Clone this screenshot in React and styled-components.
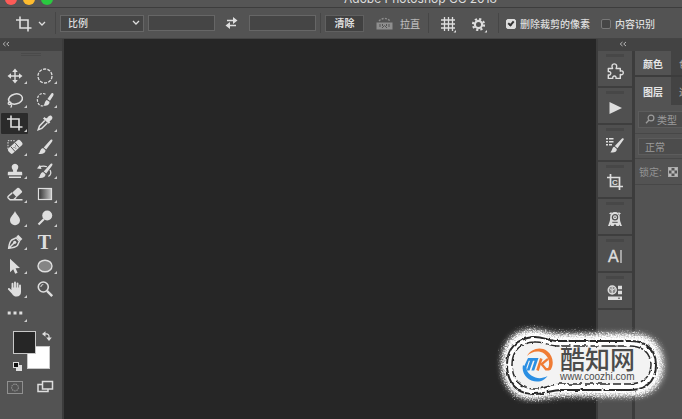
import React from "react";
import styled, { createGlobalStyle } from "styled-components";

const Svg = ({ size = 18, width, height, children, ...rest }) => (
  <svg
    width={width || size}
    height={height || size}
    viewBox={`0 0 ${width || size} ${height || size}`}
    fill="none"
    stroke="#dedede"
    strokeWidth="1.4"
    aria-hidden="true"
    {...rest}
  >
    {children}
  </svg>
);

const fill = { fill: "#dedede", stroke: "none" };

const MoveIcon = () => (
  <Svg>
    <path d="M9 3v12M3 9h12" />
    <path {...fill} d="M9 1.5 11.8 5H6.2zM9 16.5 6.2 13h5.600zM1.5 9 5 6.200v5.600zM16.5 9 13 11.800V6.200z" />
  </Svg>
);

const MarqueeIcon = () => (
  <Svg>
    <circle cx="9" cy="9" r="7" strokeWidth="1.3" strokeDasharray="3.2 1.2" />
  </Svg>
);

const LassoIcon = () => (
  <Svg>
    <ellipse cx="9.5" cy="8" rx="7" ry="5" transform="rotate(-14 9.5 8)" strokeWidth="1.500" />
    <path d="M3.6 11c-2 .4-1.800 2.700.2 2.500 1.800-.2 1.700-2.200-.2-2.500M4.800 13.300c1.200.8.900 2.300-.2 3.200" strokeWidth="1.300" />
  </Svg>
);

const QuickSelectIcon = () => (
  <Svg>
    <path d="M9.500 3.200C5 1 1.200 4.300 1.400 8.900c.2 4.500 3 6.500 6.400 6" strokeWidth="1.200" strokeDasharray="2.500 1.300" />
    <path {...fill} d="M17 2.300c.8.500.7 1.600.2 2.500l-3.200 5-2.600-1.700 3.600-5.200c.6-.8 1.300-1 2-.6zM10.800 9l2.700 1.800c.3 2.800-2.500 4.400-6.300 3.900 1.800-1.100 1.300-4.600 3.600-5.700z" />
  </Svg>
);

const CropIcon = () => (
  <Svg>
    <path d="M5 1.500V13h11.500M1 5h12v11.500" strokeWidth="1.600" />
  </Svg>
);

const EyedropperIcon = () => (
  <Svg>
    <path {...fill} d="M11 4.200c1.500-2 2.900-3.200 4.500-2.300 1.700 1.300 1 3.100-.9 4.700l-1.100.8.800.9-1.600 1.400-5.700-5.100L8.500 3l1 .900z" />
    <path d="M8.800 6.500 3.500 12l-1.300 3.800 3.600-1.400L11.300 9" strokeWidth="1.500" />
  </Svg>
);

const HealingIcon = () => (
  <Svg>
    <path d="M2 11V2.700h7" strokeWidth="1" strokeDasharray="1.500 1.200" />
    <rect {...fill} x="1.300" y="5.700" width="16" height="6.600" rx="2" transform="rotate(-42 9 9)" />
    <path d="m4.800 8.700 4.400 5M9 4.700 13.300 9.700" stroke="#535353" strokeWidth="1" />
    <path d="M8 9.500h.1M9.800 10.200h.1M9.500 8h.1" stroke="#535353" strokeLinecap="round" strokeWidth="1" />
  </Svg>
);

const BrushShape = () => (
  <path {...fill} d="M16 1.600c.8.600.5 1.400 0 2.200l-5.800 7.700-2.500-2 6.300-7.100c.8-.8 1.300-1.200 2-.8zM7 10l2.500 2.200c.1 3-3.200 4.400-7.300 3.600 2.200-.8 1.600-5.100 4.800-5.800z" />
);

const BrushIcon = () => (
  <Svg>
    <BrushShape />
  </Svg>
);

const StampIcon = () => (
  <Svg>
    <path {...fill} d="M9 1.700a3.300 3.300 0 0 1 3 4.700c-.9 1.500-1.300 2.200-1.100 3.400H15c.8 0 1.200.5 1.200 1.200v2.300H1.800V11c0-.7.400-1.200 1.200-1.200h4.100c.2-1.200-.2-1.900-1.100-3.400a3.300 3.300 0 0 1 3-4.700zM3 14.500h12V16H3z" />
  </Svg>
);

const HistoryBrushIcon = () => (
  <Svg>
    <BrushShape />
    <path d="M3 5.500c3-2 5-1.700 8-.8M14 8c1.500 2.600.6 5-1.600 6.600" strokeWidth="1.200" />
    <path {...fill} d="M1 6.500 4 2.800 5.500 7z" />
  </Svg>
);

const EraserIcon = () => (
  <Svg>
    <path {...fill} d="m6.300 7.500 5-4.400c.7-.6 1.500-.5 2.100.1l2.400 2.700c.5.600.4 1.200-.2 1.800l-5 4.500z" />
    <path d="m6.200 7.900-3.900 3.400c-.6.6-.6 1.200-.1 1.700l1.900 1.700h3.400l2.800-2.500M6 14.700h10.500" strokeWidth="1.400" />
  </Svg>
);

const GradientIcon = () => (
  <Svg>
    <defs>
      <linearGradient id="toolGradient">
        <stop offset="0" stopColor="#333" />
        <stop offset="1" stopColor="#c4c4c4" />
      </linearGradient>
    </defs>
    <rect x="2.500" y="3.500" width="13" height="11" fill="url(#toolGradient)" strokeWidth="1.200" />
  </Svg>
);

const BlurIcon = () => (
  <Svg>
    <path {...fill} d="M9 2c1 3.200 5 5.800 5 9.300A4.900 4.900 0 0 1 9 16.200a4.900 4.900 0 0 1-5-4.900C4 7.800 8 5.200 9 2z" />
  </Svg>
);

const DodgeIcon = () => (
  <Svg>
    <circle {...fill} cx="11.200" cy="6.500" r="5" />
    <path d="m8 10-5.500 5.500" strokeWidth="2.200" />
  </Svg>
);

const PenIcon = () => (
  <Svg>
    <path d="M2.700 15.200c.4-3.800 1-6.500 3-8.200l4.400-2.200 3.300 3.400-2 4.300c-1.800 1.800-4.800 2.400-8.700 2.700zM3 15l5-5" strokeWidth="1.500" />
    <circle {...fill} cx="8.700" cy="9.300" r="1.600" />
    <path {...fill} d="m10.200 4 2-2.200 4.200 4.200-2.200 2z" />
  </Svg>
);

const ArrowIcon = () => (
  <Svg>
    <path {...fill} d="M4 1.700v13.600l3.200-3 2 4.500 2.400-1-2-4.500 4.400-.2z" />
  </Svg>
);

const EllipseIcon = () => (
  <Svg>
    <ellipse cx="9" cy="9" rx="7" ry="5.800" fill="#858585" />
  </Svg>
);

const HandIcon = () => (
  <Svg>
    <path d="M6.500 9V3.700M9 8.500V2.500M11.500 9V3.500M14 10V5.500" strokeWidth="1.900" strokeLinecap="round" />
    <path {...fill} d="M5.600 7.500h9.400V12c0 2.800-1.700 4.600-4.400 4.600-2.300 0-3.500-1.200-4.600-2.900L2 9.600c-.4-1.200.8-2 1.700-1.200l1.900 1.700z" />
  </Svg>
);

const ZoomIcon = () => (
  <Svg>
    <circle cx="7.300" cy="7" r="5" strokeWidth="1.600" />
    <path d="M4.800 7a2.500 2.500 0 0 1 2.500-2.500" strokeWidth="1" />
    <path d="m11 10.800 5.200 5.300" strokeWidth="2.400" />
  </Svg>
);

const DotsIcon = () => (
  <Svg>
    <path {...fill} d="M1.700 7.500h3v3h-3zM7.500 7.500h3v3h-3zM13.300 7.500h3v3h-3z" />
  </Svg>
);

const SwapColorsIcon = () => (
  <Svg size={10}>
    <path d="M3 3c3-.5 4.500 1 4 4" strokeWidth="1.200" />
    <path {...fill} d="M0 3 3.500.200v5.600zM7 10 4.200 6.500h5.600z" />
  </Svg>
);

const MaskIcon = () => (
  <Svg width={16} height={13} stroke="#909090">
    <rect x=".5" y=".5" width="15" height="12" strokeWidth="1" />
    <circle cx="8" cy="6.500" r="3.400" strokeWidth="1.100" strokeDasharray="1.500 .8" />
  </Svg>
);

const ScreenIcon = () => (
  <Svg width={17} height={14}>
    <rect x="1" y="4.500" width="10" height="7" strokeWidth="1.500" />
    <rect x="5.500" y="1.500" width="10" height="7.500" fill="#535353" strokeWidth="1.500" />
  </Svg>
);

const ChevronIcon = () => (
  <Svg width={8} height={6}>
    <path d="m1 1 3 3 3-3" strokeWidth="1.300" />
  </Svg>
);

const SwapIcon = () => (
  <Svg width={13} height={12}>
    <path d="M2 3.500h7M4 8.500h7" strokeWidth="1.300" />
    <path {...fill} d="M8 0l4.500 3.500L8 7zM5 5v7L.5 8.500z" />
  </Svg>
);

const LevelIcon = () => (
  <Svg width={17} height={13} stroke="#8e8e8e">
    <rect x="1" y="6" width="15" height="6" fill="#8e8e8e" strokeWidth="1" />
    <path d="M4 7v3M6.500 7v2M10.500 7v2M13 7v3M6 11l2.500-2.500L11 11" stroke="#535353" strokeWidth="1" />
    <path d="M3 4c3-3.400 8-3.400 11 0" strokeWidth="1.300" strokeDasharray="2 1.300" />
  </Svg>
);

const GridIcon = () => (
  <Svg width={17} height={17}>
    <path d="M4.500 1v14M8.500 1v14M12.500 1v14M1 4h14M1 8h14M1 12h14" strokeWidth="1.300" />
    <path {...fill} d="M16 14v2.500h-2.500z" />
  </Svg>
);

const GearIcon = () => (
  <Svg width={16} height={16}>
    <circle cx="7.500" cy="7.500" r="3.600" strokeWidth="2.200" />
    <circle cx="7.500" cy="7.500" r="5.500" strokeWidth="2.200" strokeDasharray="2.160 2.160" />
    <path {...fill} d="M16 13v2.500h-2.500z" />
  </Svg>
);

const CollapseIcon = () => (
  <Svg width={8} height={6} stroke="#b4b4b4">
    <path d="M3.500 1 1.200 3l2.300 2M7 1 4.700 3 7 5" strokeWidth="1" />
  </Svg>
);

const PuzzleIcon = () => (
  <Svg>
    <path d="M2.300 6.500h4.300C5.200 3.700 6.300 1.900 8.300 1.900s3.200 1.800 1.800 4.600h4.200v2.700c1.900-.9 3 .2 3 1.600s-1.100 2.500-3 1.600v4H10c.3-1.600-.4-2.400-1.600-2.400s-1.900.800-1.600 2.400H2.300v-3.400c1.700.3 2.500-.6 2.500-1.700s-.8-2-2.500-1.700z" strokeLinejoin="round" />
  </Svg>
);

const PlayIcon = () => (
  <Svg>
    <path {...fill} d="M3.500 3 16 9 3.500 15z" />
  </Svg>
);

const BrushesIcon = () => (
  <Svg>
    <path {...fill} d="M17.700 3.500 11.500 12.300 8.800 10l7.200-7.400c1-.8 2.200 0 1.700.9zM8.300 10.800l2.500 2.200c.1 2.800-2.700 4-6.500 3.200 2-.8 1.500-4.800 4-5.400z" />
    <path d="M0 2.700h2M0 5.700h2M0 8.700h2M3 2.700h4.500M3 5.700h4.500M3 8.700h3" strokeWidth="1.500" />
  </Svg>
);

const CropSourceIcon = () => (
  <Svg>
    <path d="M4.500 1v12.500H17M1 4.500h12.500V17" strokeWidth="1.700" />
    <text x="6" y="12" fontSize="8" fontWeight="700" {...fill}>C</text>
  </Svg>
);

const CreatureIcon = () => (
  <Svg>
    <path {...fill} d="M9 2c3 0 4.800 2 4.800 5 0 3 .3 4.500 2.200 9h-2l-.8-1.500-.4 1.500h-2.400L9.800 14.500H8.200L7.600 16H5.200l-.4-1.500L4 16H2C3.900 11.500 4.200 10 4.200 7c0-3 1.800-5 4.800-5zM3 3.500 5.500 2v3zM15 3.500 12.500 2v3z" />
    <circle cx="9" cy="7.200" r="2.600" stroke="#505050" strokeWidth="1.300" />
    <circle cx="9" cy="7.200" r=".8" fill="#505050" stroke="none" />
    <path d="M6.300 12.300h5.400" stroke="#505050" strokeWidth="1" />
  </Svg>
);

const CharacterIcon = () => (
  <Svg>
    <text x="2" y="15" fontSize="16" fill="#dedede" strokeWidth=".4">A</text>
    <path d="M15 3v13" strokeWidth="1.200" />
  </Svg>
);

const LibraryIcon = () => (
  <Svg>
    <circle cx="6.200" cy="6" r="4" fill="#888" strokeWidth="1.400" />
    <path d="M6.200 3v7M3.500 4.500 6.200 6.500 9 4.500" strokeWidth="1" />
    <path {...fill} d="M12 1.700h4v3.600h-4zM12 6.700h4v3.600h-4zM2 12.500h14v3.500H2z" />
    <path d="M12 14.200h2" stroke="#505050" strokeWidth="1" />
  </Svg>
);

const SearchIcon = () => (
  <Svg size={10} stroke="#9b9b9b">
    <circle cx="6" cy="4" r="2.900" strokeWidth="1.200" />
    <path d="M4 6 1 9.300" strokeWidth="1.300" />
  </Svg>
);

const CheckerIcon = () => (
  <Svg size={10} stroke="#aaa">
    <rect x=".5" y=".5" width="9" height="9" strokeWidth="1" />
    <path fill="#bbb" stroke="none" d="M1 1h2.500v2.500H1zM6.500 1H9v2.500H6.500zM3.500 3.500h3v3h-3zM1 6.500h2.500V9H1zM6.500 6.500H9V9H6.500z" />
  </Svg>
);

const LogoIcon = () => (
  <Svg width={32} height={34}>
    <path fill="#f07c34" stroke="none" d="M5 8C9 1 18-2 25 3c6 4.500 7.500 13 3.500 19h-3.500C29 16 27 9 22 5.500 16.500 2 9.500 3.500 5 8z" />
    <path fill="#2b8fe3" stroke="none" d="M1 17C-1 26 6 33.500 15 33.500c5 0 8-2 10.500-5.500-4 2-8 3-12 1.500C7 27 4.500 23 4.500 20z" />
    <path fill="#2b8fe3" stroke="none" d="M6 10h10.500l-4.300 12.500H9.400l3.200-9.800H11L7.500 22.500H4.700L8 12.700H6.800L4 21H.8z" />
    <path d="m19.300 10.500-3.800 12" stroke="#f07c34" strokeWidth="2.600" />
    <path d="m26 10.800-6.300 5.400 4.300 5h3.500" stroke="#f07c34" strokeWidth="2.400" />
  </Svg>
);

const GlowArt = () => (
  <svg width="176" height="82" viewBox="0 0 176 82" fill="none" aria-hidden="true">
    <defs>
      <filter id="haze" x="-10%" y="-20%" width="120%" height="140%">
        <feGaussianBlur stdDeviation="3" />
      </filter>
      <filter id="grain" x="-10%" y="-20%" width="120%" height="140%">
        <feGaussianBlur stdDeviation="2" result="soft" />
        <feTurbulence type="fractalNoise" baseFrequency="0.7" numOctaves="2" seed="4" />
        <feDisplacementMap in="soft" scale="14" xChannelSelector="R" yChannelSelector="G" />
      </filter>
      <filter id="rough">
        <feTurbulence type="fractalNoise" baseFrequency="0.2" numOctaves="2" seed="7" />
        <feDisplacementMap in="SourceGraphic" scale="3" xChannelSelector="R" yChannelSelector="G" />
      </filter>
    </defs>
    <g fill="#fff">
      <path
        filter="url(#haze)"
        opacity=".75"
        d="M38 8c9 0 16 3 25 4h75c20 0 32 12 32 31s-12 31-32 31H68c-10 0-16 3-29 3C18 77 8 61 8 42S18 8 38 8z"
      />
      <path
        filter="url(#grain)"
        d="M38 9c9 0 16 3 25 4h75c19 0 29 12 29 30s-10 30-29 30H68c-10 0-16 3-29 3C18 76 9 60 9 42S19 9 38 9z"
      />
    </g>
    <path
      fill="#f3f3f3"
      d="M40 20c9-1 14 4 23 4h73c14 0 20 8 20 19s-7 19-20 19H66c-9 0-14 5-26 5-15 0-22-12-22-24s6-22 22-23z"
    />
    <g filter="url(#rough)" stroke="#2a2a2a">
      <path strokeWidth="2" strokeDasharray="34 2 20 1" d="M39 15c9-1 15 4 24 4h73c18 0 26 10 26 24s-8 25-26 25H67c-10 0-15 4-28 4C21 72 13 58 13 43s8-26 26-28z" />
      <path strokeWidth="1.500" strokeDasharray="9 3 14 2" d="M40 20c9-1 14 4 23 4h72c15 0 22 8 22 19s-7 19-22 19H66c-9 0-14 5-26 5-15 0-22-12-22-24s6-22 22-23z" />
    </g>
  </svg>
);

const tools = [
  { name: "移动", icon: <MoveIcon /> },
  { name: "椭圆选框", icon: <MarqueeIcon /> },
  { name: "套索", icon: <LassoIcon /> },
  { name: "快速选择", icon: <QuickSelectIcon /> },
  { name: "裁剪", icon: <CropIcon />, active: true },
  { name: "吸管", icon: <EyedropperIcon /> },
  { name: "修复画笔", icon: <HealingIcon /> },
  { name: "画笔", icon: <BrushIcon /> },
  { name: "仿制图章", icon: <StampIcon /> },
  { name: "历史记录画笔", icon: <HistoryBrushIcon /> },
  { name: "橡皮擦", icon: <EraserIcon /> },
  { name: "渐变", icon: <GradientIcon /> },
  { name: "模糊", icon: <BlurIcon /> },
  { name: "减淡", icon: <DodgeIcon /> },
  { name: "钢笔", icon: <PenIcon /> },
  { name: "文字", icon: "T" },
  { name: "路径选择", icon: <ArrowIcon /> },
  { name: "椭圆", icon: <EllipseIcon /> },
  { name: "抓手", icon: <HandIcon /> },
  { name: "缩放", icon: <ZoomIcon />, single: true },
  { name: "更多工具", icon: <DotsIcon /> },
];

const panels = [
  { name: "扩展", icon: <PuzzleIcon /> },
  { name: "动作", icon: <PlayIcon /> },
  { name: "画笔预设", icon: <BrushesIcon /> },
  { name: "仿制源", icon: <CropSourceIcon /> },
  { name: "设备", icon: <CreatureIcon /> },
  { name: "字符", icon: <CharacterIcon /> },
  { name: "库", icon: <LibraryIcon /> },
];

const App = () => {
  return (
    <Window>
      <GlobalStyle />
      <TitleBar>
        <Lights>
          <Light $color="#fc5b57" />
          <Light $color="#fdbb2f" />
          <Light $color="#2ac940" />
        </Lights>
        <Title>Adobe Photoshop CC 2018</Title>
      </TitleBar>

      <OptionsBar>
        <CurrentTool aria-label="裁剪工具">
          <CropIcon />
          <ChevronIcon />
        </CurrentTool>
        <Ratio>
          <RatioSelect aria-label="比例" defaultValue="比例">
            <option>比例</option>
          </RatioSelect>
          <ChevronIcon />
        </Ratio>
        <SizeInput aria-label="宽度" />
        <SwapButton aria-label="互换宽高">
          <SwapIcon />
        </SwapButton>
        <SizeInput aria-label="高度" />
        <Separator />
        <ClearButton>清除</ClearButton>
        <Straighten>
          <LevelIcon />
          拉直
        </Straighten>
        <Separator />
        <Overlays>
          <PlainButton aria-label="叠加选项">
            <GridIcon />
          </PlainButton>
          <PlainButton aria-label="其他裁剪选项">
            <GearIcon />
          </PlainButton>
        </Overlays>
        <Separator />
        <Checks>
          <CheckLabel>
            <Check type="checkbox" defaultChecked />
            删除裁剪的像素
          </CheckLabel>
          <CheckLabel>
            <Check type="checkbox" />
            内容识别
          </CheckLabel>
        </Checks>
      </OptionsBar>

      <Workspace>
        <Toolbar>
          <PanelHeader>
            <CollapseIcon />
          </PanelHeader>
          <Grip />
          <ToolGrid>
            {tools.map((tool) => (
              <Tool
                key={tool.name}
                aria-label={tool.name}
                $active={tool.active}
                $single={tool.single}
              >
                {tool.icon}
              </Tool>
            ))}
          </ToolGrid>
          <Colors>
            <Swatch aria-label="背景色" $color="#fff" $left={14} $top={15} />
            <Swatch aria-label="前景色" $color="#262626" $left={0} $top={0} />
            <SwapColors aria-label="切换颜色">
              <SwapColorsIcon />
            </SwapColors>
            <DefaultColors aria-label="默认颜色" />
          </Colors>
          <Modes>
            <PlainButton aria-label="快速蒙版">
              <MaskIcon />
            </PlainButton>
            <PlainButton aria-label="屏幕模式">
              <ScreenIcon />
            </PlainButton>
          </Modes>
        </Toolbar>

        <Canvas />

        <Side>
          <PanelHeader $right>
            <CollapseIcon />
          </PanelHeader>
          <SideBody>
            <Dock>
              {panels.map((panel) => (
                <DockButton key={panel.name} aria-label={panel.name}>
                  {panel.icon}
                </DockButton>
              ))}
            </Dock>
            <Panels>
              <Tabs $height={26}>
                <Tab $active>颜色</Tab>
                <Tab>色板</Tab>
              </Tabs>
              <Tabs $height={28}>
                <Tab $active>图层</Tab>
                <Tab>通道</Tab>
              </Tabs>
              <PanelRow $height={29}>
                <Filter>
                  <SearchIcon />
                  类型
                </Filter>
              </PanelRow>
              <PanelRow $height={25}>
                <Filter>正常</Filter>
              </PanelRow>
              <LockRow>
                锁定:
                <CheckerIcon />
              </LockRow>
            </Panels>
          </SideBody>
        </Side>
      </Workspace>

      <Watermark>
        <GlowArt />
        <Brand>
          <LogoIcon />
          <BrandText>
            <BrandName>酷知网</BrandName>
            <BrandUrl>www.coozhi.com</BrandUrl>
          </BrandText>
        </Brand>
      </Watermark>
    </Window>
  );
};

const GlobalStyle = createGlobalStyle`
  * {
    box-sizing: border-box;
  }

  body {
    margin: 0;
    background-color: #262626;
    color: #dedede;
    font-family: "Liberation Sans", "Noto Sans CJK SC", sans-serif;
    font-size: 10px;
    overflow: hidden;
  }

  button, input, select {
    font: inherit;
    color: inherit;
    margin: 0;
  }

  svg {
    display: block;
    flex-shrink: 0;
  }
`;

const Window = styled.div`
  position: relative;
  display: flex;
  flex-direction: column;
  height: 100vh;
  overflow: hidden;
`;

const TitleBar = styled.header`
  display: flex;
  justify-content: space-between;
  align-items: flex-end;
  height: 8px;
  flex-shrink: 0;
  background-color: #555;
  border-bottom: 1px solid #3d3d3d;
  overflow: hidden;
`;

const Lights = styled.div`
  display: flex;
  gap: 6px;
  padding: 0 0 2px 5px;
`;

const Light = styled.span`
  width: 12px;
  height: 12px;
  border-radius: 50%;
  background-color: ${(props) => props.$color};
`;

const Title = styled.span`
  padding: 0 185px 1px 0;
  font-family: Inter, sans-serif;
  font-size: 12px;
  line-height: 14px;
  white-space: nowrap;
`;

const OptionsBar = styled.div`
  display: flex;
  align-items: center;
  height: 31px;
  flex-shrink: 0;
  background-color: #535353;
  border-bottom: 1px solid #444;
  white-space: nowrap;

  & > * {
    flex-shrink: 0;
  }
`;

const PlainButton = styled.button`
  display: flex;
  align-items: center;
  padding: 0;
  border: none;
  background: none;
`;

const CurrentTool = styled(PlainButton)`
  gap: 5px;
  height: 22px;
  padding: 2px 9px 0 15px;
  border-right: 1px solid #464646;
`;

const Ratio = styled.div`
  display: flex;
  align-items: center;
  width: 84px;
  height: 17px;
  margin-left: 4px;
  padding-right: 3px;
  border: 1px solid #666;
  background-color: #454545;
`;

const RatioSelect = styled.select`
  flex: 1;
  appearance: none;
  height: 15px;
  padding: 0 7px;
  border: none;
  background: none;
  line-height: 15px;
  font-weight: 500;
`;

const SizeInput = styled.input`
  width: 67px;
  height: 16px;
  margin-left: 4px;
  border: 1px solid #666;
  background-color: #454545;
`;

const SwapButton = styled(PlainButton)`
  margin: 0 7px 0 10px;
`;

const Separator = styled.span`
  width: 1px;
  height: 20px;
  margin: 0 4px;
  background-color: #464646;
`;

const ClearButton = styled.button`
  width: 39px;
  height: 17px;
  padding: 0;
  border: 1px solid #606060;
  background-color: #414141;
  line-height: 15px;
  font-weight: 700;
`;

const Straighten = styled(PlainButton)`
  gap: 7px;
  margin: 0 4px 0 12px;
  padding-top: 1px;
  color: #b5b5b5;
  font-weight: 500;
`;

const Overlays = styled.div`
  display: flex;
  gap: 14px;
  align-items: center;
  padding: 3px 7px 0 7px;
`;

const Checks = styled.div`
  display: flex;
  gap: 11px;
  padding: 1px 0 0 3px;
`;

const CheckLabel = styled.label`
  display: flex;
  align-items: center;
  gap: 4px;
  font-weight: 500;
`;

const Check = styled.input`
  appearance: none;
  width: 10px;
  height: 10px;
  border: 1px solid #787878;
  border-radius: 2px;
  background-color: #464646;

  &:checked {
    display: grid;
    place-items: center;
    border-color: #dedede;
    background-color: #dedede;
  }

  &:checked::after {
    content: "";
    width: 2px;
    height: 4px;
    margin-bottom: 2px;
    border: solid #333;
    border-width: 0 2px 2px 0;
    transform: rotate(40deg);
  }
`;

const Workspace = styled.div`
  display: flex;
  flex: 1;
  min-height: 0;
`;

const Toolbar = styled.aside`
  display: flex;
  flex-direction: column;
  width: 64px;
  flex-shrink: 0;
  background-color: #535353;
  border-right: 2px solid #3c3c3c;
`;

const PanelHeader = styled.div`
  display: flex;
  align-items: center;
  justify-content: ${(props) => (props.$right ? "center" : "flex-start")};
  height: 12px;
  flex-shrink: 0;
  padding: ${(props) => (props.$right ? "0 35px 2px 0" : "0 2px 2px")};
  background-color: #434343;
`;

const Grip = styled.div`
  width: 20px;
  height: 4px;
  margin: 2px auto 7px;
  background: repeating-linear-gradient(#4a4a4a 0 1px, #535353 1px 2px);
`;

const ToolGrid = styled.div`
  display: grid;
  grid-template-columns: 27px 27px;
  grid-template-rows: repeat(11, 1fr);
  column-gap: 3px;
  height: 261px;
  padding-left: 1px;
`;

const Tool = styled.button`
  position: relative;
  display: grid;
  place-items: center;
  align-self: center;
  height: 21px;
  padding: 0;
  border: none;
  border-radius: 1px;
  background-color: ${(props) => (props.$active ? "#2b2b2b" : "transparent")};
  font-family: "Liberation Serif", serif;
  font-size: 20px;
  font-weight: 700;
  line-height: 20px;

  &::after {
    content: "";
    display: ${(props) => (props.$single ? "none" : "block")};
    position: absolute;
    right: 1px;
    bottom: 2px;
    border-left: 3px solid transparent;
    border-bottom: 3px solid #ccc;
  }
`;

const Colors = styled.div`
  position: relative;
  height: 41px;
  margin: 6px 10px 0 13px;
`;

const Swatch = styled.button`
  position: absolute;
  left: ${(props) => props.$left}px;
  top: ${(props) => props.$top}px;
  width: 23px;
  height: 23px;
  padding: 0;
  border: 1px solid #c8c8c8;
  background-color: ${(props) => props.$color};
`;

const SwapColors = styled(PlainButton)`
  position: absolute;
  left: 29px;
  top: 0;
`;

const DefaultColors = styled(PlainButton)`
  position: absolute;
  left: 0;
  top: 31px;
  width: 6px;
  height: 6px;
  border: 1px solid #dedede;
  background-color: #111;
  box-shadow: 3px 3px 0 #dedede;
`;

const Modes = styled.div`
  display: flex;
  gap: 14px;
  margin: 8px 0 0 7px;
`;

const Canvas = styled.main`
  flex: 1;
  min-width: 0;
  background-color: #262626;
`;

const Side = styled.aside`
  display: flex;
  flex-direction: column;
  width: 86px;
  flex-shrink: 0;
  background-color: #535353;
  border-left: 2px solid #3c3c3c;
`;

const SideBody = styled.div`
  display: flex;
  flex: 1;
  min-height: 0;
`;

const Dock = styled.div`
  width: 37px;
  flex-shrink: 0;
  background-color: #505050;
  border-right: 3px solid #3c3c3c;
`;

const DockButton = styled.button`
  display: grid;
  place-items: center;
  width: 100%;
  height: 37px;
  padding: 5px 0 0;
  border: none;
  border-bottom: 2px solid #3e3e3e;
  background: linear-gradient(#474747, #474747) 50% 3px / 18px 3px no-repeat;
`;

const Panels = styled.div`
  flex: 1;
  min-width: 0;
  overflow: hidden;
  white-space: nowrap;
`;

const Tabs = styled.div`
  display: flex;
  height: ${(props) => props.$height}px;
  border-bottom: 2px solid #3c3c3c;
  background-color: #434343;

  & + & {
    border-bottom: none;
  }
`;

const Tab = styled.button`
  flex-shrink: 0;
  width: 36px;
  padding: 0;
  border: none;
  background-color: ${(props) => (props.$active ? "#535353" : "#434343")};
  color: ${(props) => (props.$active ? "#e6e6e6" : "#aaa")};
  font-weight: ${(props) => (props.$active ? 700 : 400)};
`;

const PanelRow = styled.div`
  display: flex;
  align-items: center;
  height: ${(props) => props.$height}px;
  padding-left: 3px;
  border-bottom: 1px solid #474747;
`;

const Filter = styled.button`
  display: flex;
  align-items: center;
  gap: 2px;
  width: 80px;
  height: 17px;
  flex-shrink: 0;
  padding: 0 6px;
  border: 1px solid #5c5c5c;
  background-color: #4c4c4c;
  color: #9b9b9b;
`;

const LockRow = styled.div`
  display: flex;
  align-items: center;
  gap: 6px;
  height: 26px;
  padding-left: 4px;
  border-bottom: 1px solid #474747;
  color: #949494;
`;

const Watermark = styled.div`
  position: absolute;
  right: 12px;
  bottom: 15px;
`;

const Brand = styled.div`
  position: absolute;
  top: 26px;
  left: 28px;
  display: flex;
  gap: 6px;
`;

const BrandText = styled.div`
  display: flex;
  flex-direction: column;
  color: #4b4b4b;
  white-space: nowrap;
`;

const BrandName = styled.strong`
  font-size: 25px;
  line-height: 24px;
  font-weight: 500;
`;

const BrandUrl = styled.span`
  font-size: 10px;
  line-height: 10px;
`;

export default App;
